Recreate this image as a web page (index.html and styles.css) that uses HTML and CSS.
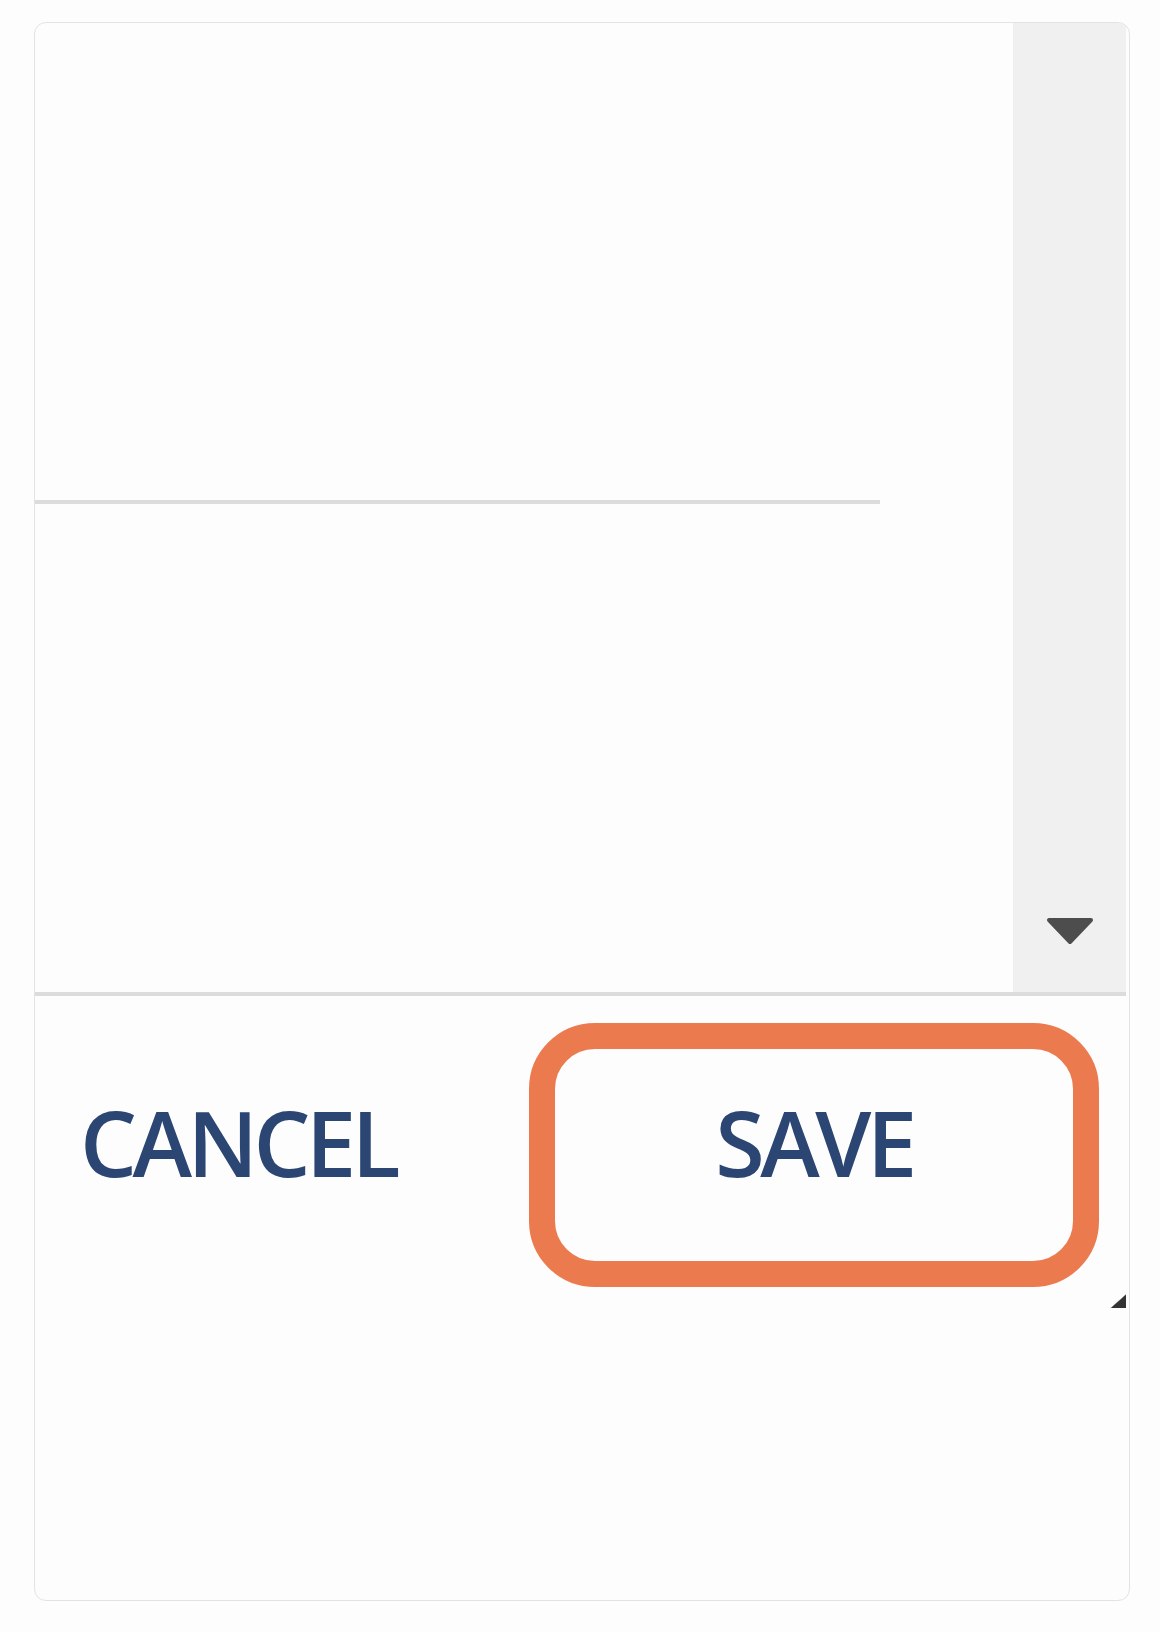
FILE: index.html
```html
<html lang="en">
<head>
    <meta charset="UTF-8">
    <meta name="viewport" content="width=device-width, initial-scale=1.0">
    <title>Edit</title>
    <link rel="stylesheet" href="styles.css">
</head>
<body>

  <div class="card">

    <div class="panel">
        <div class="field">
            <div class="rule"></div>
        </div>
        <div class="scroll">
            <svg class="arrow" width="48" height="28" viewBox="0 0 48 28">
                <polygon points="3,3 45,3 24,25" fill="#4d4d4d" stroke="#4d4d4d" stroke-width="4" stroke-linejoin="round"/>
            </svg>
        </div>
    </div>

    <div class="footer">
        <div class="actions">
            <div class="button cancel">CANCEL</div>
            <div class="button save">SAVE</div>
        </div>
        <div class="grip"></div>
    </div>

  </div>

</body>
</html>
```

FILE: styles.css
```css
*{
    margin:0;
    padding:0;
    box-sizing:border-box;
}

html{
    font-family: 'Open Sans', 'Noto Sans', sans-serif;
    --bg:#fdfdfd;
    --line:#dcdcdc;
    --scroll-bg:#f0f0f0;
    --text:#2b4673;
    --accent:#ec7a4f;
}

body{
    background:var(--bg);
}

.card{
    margin:22px 0 0 34px;
    width:1096px;
    height:1579px;
    border:1px solid #e3e3e3;
    border-radius:12px;
    background:var(--bg);
    padding-right:3px;
    overflow:hidden;
}

.panel{
    display:flex;
    height:973px;
    border-bottom:4px solid var(--line);
}

.field{ flex:1; }

.rule{
    margin-top:477px;
    width:845px;
    height:4px;
    background:var(--line);
}

.scroll{
    width:113px;
    background:var(--scroll-bg);
    display:flex;
    align-items:flex-end;
    justify-content:center;
    padding-bottom:47px;
}

.footer{
    display:flex;
    flex-direction:column;
    padding-top:27px;
}

.actions{
    display:flex;
    justify-content:space-between;
    padding:0 27px 0 45px;
}

.button{
    height:264px;
    display:flex;
    align-items:center;
    padding-bottom:26px;
    font-size:90px;
    font-weight:600;
    letter-spacing:-4.5px;
    color:var(--text);
    border:26px solid transparent;
}

.cancel{ border-left:0; }

.save{
    width:570px;
    justify-content:center;
    border-color:var(--accent);
    border-radius:66px;
}

.grip{
    align-self:flex-end;
    margin-top:5px;
    width:18px;
    height:16px;
    background:linear-gradient(to bottom right, transparent 55%, #333 60%);
}
```
